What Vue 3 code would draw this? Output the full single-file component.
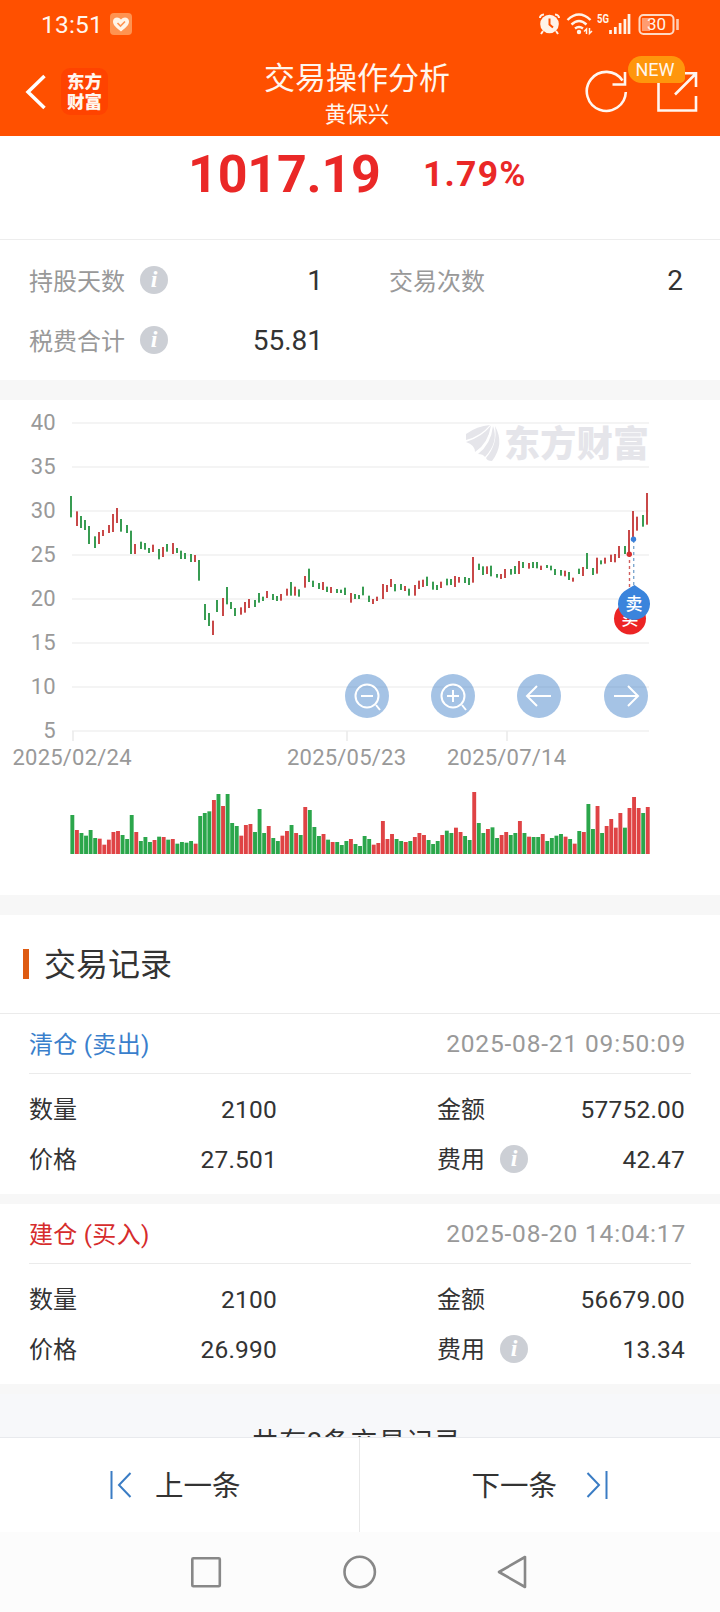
<script setup>
// Daily bars: [high y, low y, volume, up], a third of a pixel per unit
const days = [
  [48, 112, 117, 0], [94, 138, 72, 1], [108, 144, 63, 0], [120, 150, 55, 0], [138, 192, 72, 0],
  [169, 204, 48, 0], [156, 192, 46, 1], [150, 168, 28, 1], [135, 159, 43, 1], [102, 156, 66, 1],
  [84, 129, 69, 1], [117, 155, 57, 0], [135, 159, 45, 0], [152, 222, 117, 0], [192, 222, 66, 1],
  [185, 207, 39, 0], [189, 209, 51, 0], [204, 219, 36, 0], [194, 216, 42, 1], [207, 238, 52, 0],
  [201, 231, 51, 1], [192, 215, 43, 0], [189, 222, 45, 1], [204, 219, 31, 0], [212, 237, 36, 0],
  [219, 237, 34, 0], [222, 246, 39, 0], [225, 246, 31, 1], [240, 302, 114, 0], [372, 420, 123, 0],
  [399, 438, 128, 0], [422, 465, 162, 1], [360, 396, 180, 0], [354, 408, 144, 1], [321, 373, 180, 0],
  [366, 387, 93, 0], [384, 408, 84, 0], [382, 404, 55, 1], [366, 398, 87, 1], [357, 384, 90, 1],
  [360, 381, 66, 0], [339, 368, 135, 0], [350, 363, 63, 0], [333, 354, 84, 1], [342, 360, 48, 0],
  [348, 363, 39, 0], [342, 362, 55, 1], [326, 347, 69, 1], [306, 347, 87, 0], [320, 347, 63, 1],
  [328, 350, 57, 0], [288, 323, 141, 1], [266, 306, 132, 0], [302, 321, 81, 0], [309, 327, 54, 0],
  [306, 330, 60, 1], [320, 336, 43, 0], [321, 339, 36, 1], [327, 339, 36, 0], [329, 339, 27, 0],
  [323, 345, 39, 0], [339, 368, 45, 1], [342, 357, 30, 0], [345, 357, 24, 0], [320, 346, 54, 0],
  [347, 366, 45, 0], [357, 372, 28, 1], [350, 363, 33, 1], [312, 357, 99, 1], [315, 336, 45, 1],
  [297, 321, 60, 1], [312, 334, 45, 0], [312, 330, 39, 0], [318, 333, 36, 1], [326, 347, 39, 0],
  [315, 347, 51, 1], [302, 327, 63, 1], [299, 321, 57, 1], [290, 318, 42, 0], [305, 329, 30, 0],
  [315, 330, 39, 0], [305, 324, 57, 1], [296, 316, 70, 0], [297, 315, 63, 0], [288, 321, 79, 1],
  [291, 308, 66, 1], [291, 309, 54, 0], [294, 315, 42, 0], [231, 308, 186, 1], [251, 270, 93, 0],
  [259, 285, 63, 0], [259, 282, 75, 1], [257, 289, 80, 0], [282, 293, 48, 0], [282, 297, 57, 1],
  [267, 294, 66, 1], [267, 284, 57, 0], [258, 282, 63, 0], [243, 282, 99, 1], [246, 264, 63, 0],
  [249, 266, 52, 1], [246, 264, 51, 0], [246, 265, 51, 0], [257, 270, 60, 1], [255, 264, 39, 0],
  [257, 271, 48, 0], [267, 285, 55, 0], [270, 287, 60, 0], [272, 289, 52, 1], [276, 300, 45, 0],
  [293, 305, 31, 1], [266, 282, 69, 0], [261, 288, 66, 1], [219, 267, 150, 0], [264, 285, 75, 0],
  [233, 281, 144, 1], [241, 253, 63, 0], [233, 251, 84, 1], [224, 246, 105, 1], [222, 247, 79, 1],
  [198, 234, 123, 1], [198, 222, 79, 0], [150, 222, 138, 1], [93, 174, 171, 1], [110, 152, 138, 1],
  [105, 140, 123, 0], [39, 134, 141, 1],
];

const step = 580 / 127;
const bars = days.map(([high, low, vol, up], i) => {
  const center = 70 + step * (i + 0.5);
  return {
    // candles sit on a two pixel raster
    x: 2 * Math.floor((center - 0.7) / 2),
    y: 80 + high / 3,
    h: (low - high) / 3,
    vx: center - 1.9,
    vh: vol / 3,
    cls: up ? "up" : "down",
  };
});

const prices = [40, 35, 30, 25, 20, 15, 10, 5];
const priceY = (p) => 331 - (p - 5) * 8.8;

const dates = [
  { x: 72, tick: 73, text: "2025/02/24" },
  { x: 346.5, tick: 347, text: "2025/05/23" },
  { x: 506.5, tick: 507, text: "2025/07/14" },
];

const tools = [
  { x: 367, path: "M-6 0H6M9 9L13 14", lens: true },
  { x: 453, path: "M-6 0H6M0 -6V6M9 9L13 14", lens: true },
  { x: 539, path: "M12 0H-11M-2 -10L-12 0L-2 10" },
  { x: 626, path: "M-12 0H11M2 -10L12 0L2 10" },
];

const records = [
  {
    kind: "sell",
    name: "清仓 (卖出)",
    time: "2025-08-21 09:50:09",
    count: "2100",
    amount: "57752.00",
    price: "27.501",
    fee: "42.47",
  },
  {
    kind: "buy",
    name: "建仓 (买入)",
    time: "2025-08-20 14:04:17",
    count: "2100",
    amount: "56679.00",
    price: "26.990",
    fee: "13.34",
  },
];
</script>

<template>
  <div class="page">
    <header class="header">
      <div class="status">
        <span class="clock">13:51</span>
        <svg class="health" width="22" height="22" viewBox="0 0 22 22">
          <rect width="22" height="22" rx="4" fill="#ff9350" />
          <path d="M11 18.5C6 14.5 3 12 3 8.5C3 4 8.500 3 11 6.500C13.500 3 19 4 19 8.500C19 12 16 14.500 11 18.500Z" fill="#fff5e8" />
          <path d="M7.500 10L10.500 13L15 8.500" fill="none" stroke="#ff9350" stroke-width="1.600" />
        </svg>
        <svg class="signals" width="146" height="28" viewBox="534 10 146 28">
          <g fill="none" stroke="#fff3e8" stroke-width="2">
            <circle cx="549.500" cy="24" r="9.300" fill="#fff3e8" stroke="none" />
            <path d="M540 18Q540 15 544 14.500M559 18Q559 15 555 14.500M543 31L541 34M556 31L558 34" />
            <path d="M549.500 18.500V24.500L553 27.500" stroke="#ff5000" />
            <path d="M567.500 20Q579 9 590.500 20M571.500 24.500Q579 17.500 586.500 24.500M575 28.500Q579 25.500 583 28.500" stroke-width="2.400" />
            <path d="M586.500 34V29L584 31.500M589.500 28V33.500L592 31" stroke-width="1.500" />
          </g>
          <circle cx="579" cy="32" r="2.200" fill="#fff3e8" />
          <text class="net" x="597" y="23" textLength="12" lengthAdjust="spacingAndGlyphs">5G</text>
          <path d="M610.500 30V34M615.300 27V34M620.100 23V34M624.900 19V34M629 14V34" stroke="#fff3e8" stroke-width="2.700" />
          <rect x="639.500" y="15" width="34" height="19" rx="4" fill="none" stroke="#ffd9c4" stroke-width="2" />
          <path d="M642 18H650V31H642Z" fill="#ff9c70" />
          <path d="M677.500 19V30" stroke="#ffc9ae" stroke-width="2.600" />
          <text class="battery" x="656.500" y="30" text-anchor="middle">30</text>
        </svg>
      </div>
      <div class="navbar">
        <svg class="back" width="24" height="38" viewBox="0 0 24 38">
          <path d="M20.500 3L4 19L20.500 35" fill="none" stroke="#fff" stroke-width="3.500" />
        </svg>
        <div class="logo"><span>东方</span><span>财富</span></div>
        <div class="heading">
          <div class="title">交易操作分析</div>
          <div class="subtitle">黄保兴</div>
        </div>
        <div class="actions">
          <svg width="114" height="60" viewBox="584 54 114 60">
            <g fill="none" stroke="#fff6f0" stroke-width="2.600">
              <path d="M625.800 92A19.500 19.500 0 1 1 622.500 80.500" />
              <path d="M625 72V84.500H612.500" />
              <path d="M658.500 80V110.500H696V96M684 73.300H696V87M675 94.500L695.500 74" />
            </g>
          </svg>
          <span class="new">NEW</span>
        </div>
      </div>
    </header>

    <section class="profit">
      <span class="gain">1017.19</span>
      <span class="rate">1.79%</span>
    </section>

    <section class="stats">
      <div class="stat">
        <span class="label">持股天数</span><i class="info">i</i><span class="num">1</span>
      </div>
      <div class="stat"><span class="label">交易次数</span><span class="num">2</span></div>
      <div class="stat">
        <span class="label">税费合计</span><i class="info">i</i><span class="num">55.81</span>
      </div>
    </section>

    <section class="chart">
      <svg width="720" height="495" viewBox="0 0 720 495">
        <g v-for="p in prices" :key="p">
          <path class="grid" :d="`M72 ${priceY(p)}H649`" />
          <text class="axis" x="55.500" :y="priceY(p) + 6.500" text-anchor="end">{{ p }}</text>
        </g>
        <g v-for="d in dates" :key="d.text">
          <path class="tick" :d="`M${d.tick} 331V341`" />
          <text class="axis" :x="d.x" y="365" text-anchor="middle" textLength="119">{{ d.text }}</text>
        </g>

        <g class="watermark">
          <path d="M466 34Q477 26 490 25Q481 36 466 40Z" />
          <path d="M466 42Q482 37 491 25.500Q488 44 475 52Q475 45 466 42Z" />
          <path d="M478 54Q491 44 493 26Q499 42 485 57Q483 54 478 54Z" />
          <path d="M495 26Q505 44 492 61Q487 61 486 58Q498 44 495 26Z" />
          <text x="504" y="57" textLength="145">东方财富</text>
        </g>

        <rect v-for="(b, i) in bars" :key="'c' + i" :class="b.cls" :x="b.x" :y="b.y" width="2" :height="b.h" />
        <rect v-for="(b, i) in bars" :key="'v' + i" :class="['vol', b.cls]" :x="b.vx" :y="454 - b.vh" width="3.900" :height="b.vh" />

        <path d="M629.500 154V187" stroke="#d0605f" stroke-width="1.400" stroke-dasharray="3 3" />
        <path d="M633.700 140V187" stroke="#7fa8cf" stroke-width="1.400" stroke-dasharray="3 3" />
        <circle cx="629.300" cy="154.300" r="2.700" fill="#d6302f" />
        <circle cx="633.500" cy="139.300" r="2.700" fill="#3a80da" />
        <circle cx="630" cy="218.500" r="16" fill="#ec2424" />
        <text class="pin" x="630" y="225" text-anchor="middle">买</text>
        <path d="M634.500 185L641 189.500A16 16 0 1 1 627 189.500Z" fill="#3a84dc" />
        <text class="pin" x="634" y="210" text-anchor="middle">卖</text>

        <g v-for="t in tools" :key="t.x" :transform="`translate(${t.x} 296)`">
          <circle r="22" fill="#3a7cc6" fill-opacity="0.460" />
          <g fill="none" stroke="#fff" stroke-width="2">
            <circle v-if="t.lens" r="11.500" />
            <path :d="t.path" />
          </g>
        </g>
      </svg>
    </section>

    <h2 class="section-title">交易记录</h2>

    <section v-for="r in records" :key="r.time" class="record">
      <div class="record-head">
        <span :class="['name', r.kind]">{{ r.name }}</span>
        <span class="time">{{ r.time }}</span>
      </div>
      <div class="record-body">
        <div class="cell"><span>数量</span><b>{{ r.count }}</b></div>
        <div class="cell"><span>金额</span><b>{{ r.amount }}</b></div>
        <div class="cell"><span>价格</span><b>{{ r.price }}</b></div>
        <div class="cell"><span>费用</span><i class="info">i</i><b>{{ r.fee }}</b></div>
      </div>
    </section>

    <div class="total">共有2条交易记录</div>

    <footer class="pager">
      <div class="pager-item prev">
        <svg width="22" height="30" viewBox="0 0 22 30">
          <path d="M1.500 1V29M20.500 3L9 15L20.500 27" fill="none" stroke="#3a7cc4" stroke-width="2" />
        </svg>
        <span>上一条</span>
      </div>
      <div class="pager-item next">
        <span>下一条</span>
        <svg width="22" height="30" viewBox="0 0 22 30">
          <path d="M20.500 1V29M1.500 3L13 15L1.500 27" fill="none" stroke="#3a7cc4" stroke-width="2" />
        </svg>
      </div>
    </footer>

    <nav class="system">
      <svg width="720" height="80" viewBox="0 0 720 80">
        <g fill="none" stroke="#888" stroke-width="2.600" stroke-linejoin="round">
          <rect x="192.300" y="26.300" width="27.500" height="28" rx="1" />
          <circle cx="359.700" cy="40" r="15.200" />
          <path d="M525 25V55L499 40Z" />
        </g>
      </svg>
    </nav>
  </div>
</template>

<style>
body {
  margin: 0;
  background: #fff;
}
</style>

<style scoped>
.page {
  display: flex;
  flex-direction: column;
  width: 720px;
  height: 1612px;
  overflow: hidden;
  background: #fff;
  color: #333;
  font-family: Roboto, "Noto Sans CJK SC", sans-serif;
}

svg {
  display: block;
}

.header {
  height: 136px;
  flex: none;
  background: #ff5000;
  color: #fff6ee;
}

.status {
  display: flex;
  align-items: center;
  height: 48px;
  padding: 0 40px 0 41px;
}

.clock {
  width: 69px;
  font-size: 24.5px;
  letter-spacing: 0.2px;
}

.signals {
  margin-left: auto;
}

.net {
  fill: #fff3e8;
  font-size: 12px;
  font-weight: bold;
}

.battery {
  fill: #fff3e8;
  font-size: 17px;
}

.navbar {
  position: relative;
  display: flex;
  height: 88px;
}

.back {
  margin: 25px 0 0 24px;
}

.logo {
  display: flex;
  flex-direction: column;
  align-items: center;
  justify-content: center;
  width: 47px;
  height: 47px;
  margin: 20px 0 0 13px;
  border-radius: 9px;
  background: #ff4300;
  font-size: 17.5px;
  font-weight: 900;
  line-height: 20px;
}

.heading {
  position: absolute;
  left: 199px;
  width: 316px;
  text-align: center;
}

.title {
  margin-top: 10px;
  font-size: 31px;
  line-height: 42px;
}

.subtitle {
  font-size: 21.5px;
  line-height: 30px;
}

.actions {
  position: relative;
  margin: 6px 22px 0 auto;
}

.new {
  position: absolute;
  left: 44px;
  top: 2px;
  width: 57px;
  height: 27px;
  border-radius: 14px 14px 5px 14px;
  background: #ff960c;
  font-size: 18px;
  line-height: 28px;
  text-align: center;
  text-indent: -3px;
}

.profit {
  display: flex;
  flex: none;
  align-items: center;
  box-sizing: border-box;
  height: 104px;
  padding: 0 0 27px 188px;
  border-bottom: 1px solid #ededed;
  color: #ea2827;
  font-weight: bold;
}

.gain {
  width: 235px;
  font-size: 52px;
  letter-spacing: -0.2px;
}

.rate {
  font-size: 35.5px;
  letter-spacing: 1.2px;
}

.stats {
  display: grid;
  flex: none;
  grid-template-columns: 294px 294px;
  grid-auto-rows: 60px;
  column-gap: 66px;
  box-sizing: border-box;
  height: 160px;
  padding: 10px 0 0 29px;
  border-bottom: 20px solid #f7f7f7;
}

.stat {
  display: flex;
  align-items: center;
}

.label {
  padding-bottom: 2px;
  color: #999;
  font-size: 24px;
}

.num {
  margin-left: auto;
  font-size: 28px;
}

.info {
  width: 28px;
  height: 28px;
  margin-left: 15px;
  border-radius: 50%;
  background: #cccfd5;
  color: #fff;
  font: italic bold 24px/27px "Liberation Serif", serif;
  text-align: center;
}

.chart {
  flex: none;
  height: 495px;
  border-bottom: 20px solid #f7f7f7;
}

.grid {
  stroke: #f4f4f4;
  stroke-width: 2;
}

.tick {
  stroke: #ebebeb;
  stroke-width: 1.6;
}

.axis {
  fill: #999;
  font-size: 22px;
}

.watermark {
  fill: #e5e5ea;
  font-size: 36px;
  font-weight: 900;
}

.up {
  fill: #c84848;
}

.down {
  fill: #389c52;
}

.vol.up {
  fill: #df4345;
}

.vol.down {
  fill: #2ba64b;
}

.pin {
  fill: #fff;
  font-size: 17px;
  font-weight: 500;
}

.section-title {
  display: flex;
  flex: none;
  align-items: center;
  box-sizing: border-box;
  height: 99px;
  margin: 0;
  padding: 0 0 4px 23px;
  border-bottom: 1px solid #ebebeb;
  font-size: 32px;
  font-weight: normal;
}

.section-title::before {
  width: 6px;
  height: 30px;
  margin: 3px 15px 0 0;
  background: #de5b12;
  content: "";
}

.record {
  flex: none;
  box-sizing: border-box;
  height: 190px;
  border-bottom: 10px solid #f7f7f7;
  font-size: 24px;
}

.record-head {
  display: flex;
  align-items: center;
  justify-content: space-between;
  box-sizing: border-box;
  height: 60px;
  margin: 0 29px;
  padding-right: 5px;
  border-bottom: 1px solid #ebebeb;
}

.name {
  padding-bottom: 2px;
  letter-spacing: 0.3px;
}

.sell {
  color: #3a7fcc;
}

.buy {
  color: #d62c2c;
}

.time {
  color: #999;
  font-size: 24.5px;
  letter-spacing: 0.82px;
}

.record-body {
  display: grid;
  grid-template-columns: 248px 248px;
  grid-auto-rows: 50px;
  column-gap: 160px;
  padding: 10px 0 0 29px;
}

.cell {
  display: flex;
  align-items: center;
}

.cell span {
  padding-bottom: 3px;
}

.cell b {
  margin-left: auto;
  font-size: 24.5px;
  font-weight: normal;
  letter-spacing: 0.2px;
}

.total {
  flex: none;
  height: 43px;
  overflow: hidden;
  background: #f7f8fa;
  font-size: 27px;
  letter-spacing: 0.7px;
  line-height: 99px;
  text-align: center;
  text-indent: -7px;
}

.pager {
  display: flex;
  flex: none;
  box-sizing: border-box;
  height: 95px;
  border-top: 1px solid #e8eaed;
}

.pager-item {
  display: flex;
  flex: 1;
  align-items: center;
  box-sizing: border-box;
  font-size: 28.5px;
}

.pager-item span {
  padding-bottom: 3px;
}

.prev {
  gap: 23px;
  padding-left: 110px;
  border-right: 1px solid #e8e8e8;
}

.next {
  gap: 29px;
  padding-left: 112px;
}

.system {
  flex: none;
  height: 80px;
  background: #fcfcfc;
}
</style>
